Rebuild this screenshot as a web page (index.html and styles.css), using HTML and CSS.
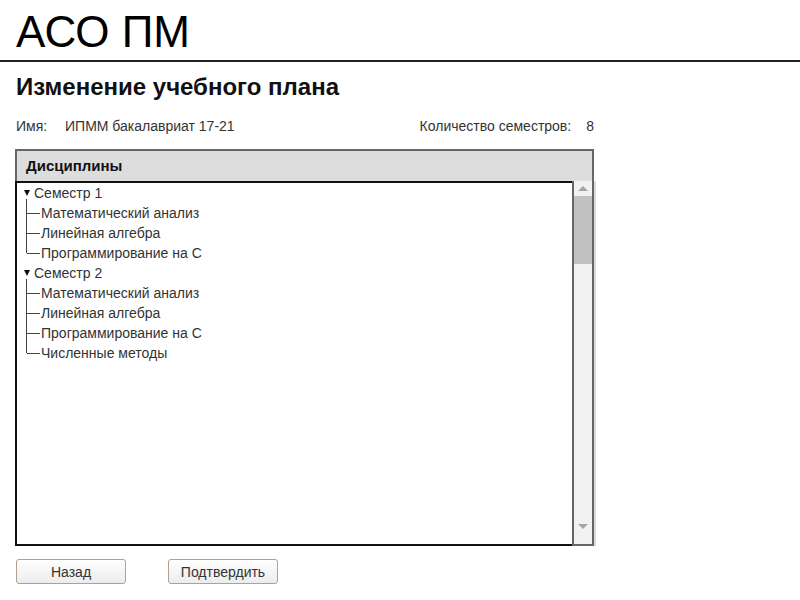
FILE: index.html
```html
<!DOCTYPE html>
<html lang="ru">
<head>
<meta charset="utf-8">
<title>АСО ПМ</title>
<link rel="stylesheet" href="styles.css">
</head>
<body>
<header class="topbar">
  <div class="brand">АСО ПМ</div>
</header>
<main class="page">
  <h1 class="title">Изменение учебного плана</h1>
  <div class="info">
    <div class="field"><span class="label">Имя:</span><span class="value">ИПММ бакалавриат 17-21</span></div>
    <div class="field"><span class="label">Количество семестров:</span><span class="value">8</span></div>
  </div>
  <section class="panel">
    <div class="panel-head">Дисциплины</div>
    <div class="panel-body">
      <ul class="tree">
        <li class="sem"><span class="tri"></span>Семестр 1</li>
        <li class="item first">Математический анализ</li>
        <li class="item">Линейная алгебра</li>
        <li class="item last">Программирование на C</li>
        <li class="sem"><span class="tri"></span>Семестр 2</li>
        <li class="item first">Математический анализ</li>
        <li class="item">Линейная алгебра</li>
        <li class="item">Программирование на C</li>
        <li class="item last">Численные методы</li>
      </ul>
      <div class="scroll">
        <div class="arrow up"></div>
        <div class="thumb"></div>
        <div class="track"></div>
        <div class="arrow down"></div>
      </div>
    </div>
  </section>
  <div class="actions">
    <button class="btn">Назад</button>
    <button class="btn">Подтвердить</button>
  </div>
</main>
</body>
</html>
```
FILE: styles.css
```css
html, body {
  margin: 0;
  padding: 0;
  background: #fff;
}
body {
  font-family: "Liberation Sans", Arial, sans-serif;
  color: #333;
}
.topbar {
  height: 60px;
  border-bottom: 2px solid #222;
  padding: 0 16px;
}
.brand {
  padding-top: 7px;
  font-size: 44px;
  line-height: 50px;
  color: #000;
}
.page {
  padding: 0 16px 0 15px;
  width: 579px;
}
.title {
  margin: 11px 0 0 1px;
  font-size: 24px;
  line-height: 28px;
  font-weight: bold;
  color: #111;
}
.info {
  margin: 17px 0 0 1px;
  display: flex;
  justify-content: space-between;
  font-size: 14px;
  line-height: 16px;
  color: #333;
}
.field .label {
  margin-right: 15px;
}
.field:first-child .label {
  display: inline-block;
  width: 49px;
  margin-right: 0;
}
.panel {
  margin-top: 15px;
  width: 579px;
}
.panel-head {
  height: 30px;
  line-height: 30px;
  background: #dddddd;
  border: 2px solid #666;
  border-bottom: none;
  padding-left: 9px;
  font-size: 15px;
  font-weight: bold;
  color: #111;
}
.panel-body {
  display: flex;
  height: 365px;
}
.tree {
  flex: 1;
  list-style: none;
  margin: 0;
  padding: 0;
  border: 2px solid #111;
  border-right: none;
  font-size: 14px;
  line-height: 20px;
  color: #333;
}
.tree li {
  height: 20px;
  position: relative;
}
.sem {
  padding-left: 17px;
}
.tri {
  position: absolute;
  left: 7px;
  top: 7px;
  width: 0;
  height: 0;
  border-left: 3px solid transparent;
  border-right: 3px solid transparent;
  border-top: 6px solid #111;
}
.item {
  padding-left: 24px;
}
.item::before {
  content: "";
  position: absolute;
  left: 9px;
  top: 0;
  height: 20px;
  border-left: 1px solid #444;
}
.item.first::before {
  top: -4px;
  height: 24px;
}
.item.last::before {
  height: 10px;
}
.item.first.last::before {
  height: 14px;
}
.item::after {
  content: "";
  position: absolute;
  left: 10px;
  top: 10px;
  width: 13px;
  border-top: 1px solid #444;
}
.scroll {
  width: 18px;
  border: 2px solid #666;
  border-top: none;
  background: #f1f1f1;
  display: flex;
  flex-direction: column;
  box-shadow: 2px 0 0 #ddd;
}
.arrow {
  height: 15px;
  display: flex;
  align-items: center;
  justify-content: center;
}
.arrow.up::before {
  content: "";
  border-left: 5px solid transparent;
  border-right: 5px solid transparent;
  border-bottom: 5px solid #a3a3a3;
}
.arrow.down::before {
  content: "";
  border-left: 5px solid transparent;
  border-right: 5px solid transparent;
  border-top: 5px solid #a3a3a3;
}
.thumb {
  height: 68px;
  background: #c1c1c1;
}
.track {
  flex: 1;
}
.arrow.down {
  height: 21px;
  align-items: flex-start;
  padding-top: 1px;
  box-sizing: border-box;
}
.actions {
  margin-top: 13px;
  display: flex;
  gap: 42px;
  padding-left: 1px;
}
.btn {
  width: 110px;
  height: 25px;
  border: 1px solid #b0a08c;
  border-radius: 3px;
  background: linear-gradient(#ffffff, #ececec);
  font-family: "Liberation Sans", Arial, sans-serif;
  font-size: 14px;
  color: #333;
  padding: 0;
}
```
